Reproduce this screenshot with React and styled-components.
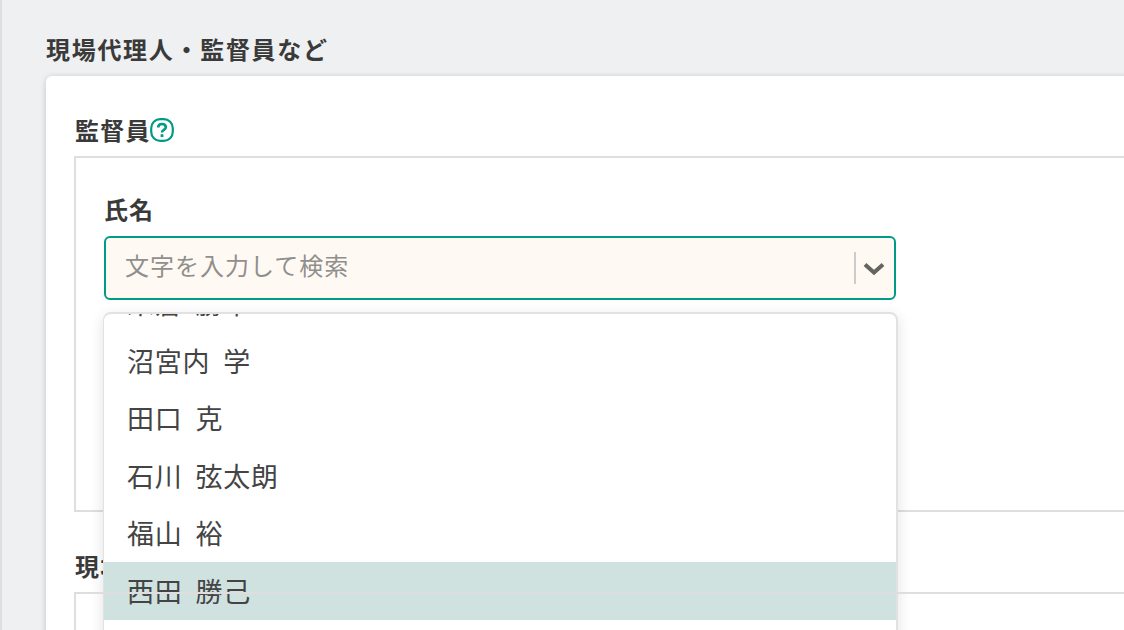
import React from 'react'
import styled, { createGlobalStyle } from 'styled-components'

const GlobalStyle = createGlobalStyle`
  html, body {
    margin: 0;
    height: 630px;
    overflow: hidden;
    background: #eff0f2;
  }
  * { box-sizing: border-box; }
`;

const Page = styled.div`
  width: 1124px;
  height: 630px;
  overflow: hidden;
  padding-left: 46px;
  background: #eff0f2;
  border-left: 2px solid #dedfe1;
  font-family: "Noto Sans CJK JP", "Noto Sans", sans-serif;
  color: #3a3a3a;
`;

const PageTitle = styled.h2`
  margin: 0 0 0 -2px;
  padding-top: 31px;
  height: 76px;
  font-size: 24px;
  line-height: 36px;
  font-weight: 700;
  letter-spacing: 1.7px;
`;

const Card = styled.section`
  margin-left: -2px;
  width: 1100px;
  height: 700px;
  padding: 36px 0 0 28px;
  background: #fff;
  border-radius: 6px 0 0 0;
  box-shadow: 0 1px 6px rgba(0, 0, 0, 0.18);
`;

const Label = styled.div`
  display: flex;
  align-items: center;
  height: 36px;
  padding: 0 0 2px 1px;
  font-size: 24px;
  font-weight: 700;
  letter-spacing: 1.3px;
  margin-bottom: 8px;
`;

const Help = styled.svg`
  width: 24px;
  height: 24px;
  margin: 2px 0 0 -1px;
`;

const Box = styled.div`
  position: relative;
  height: ${p => p.$height}px;
  margin-bottom: ${p => p.$bottom}px;
  padding: 34px 0 0 28px;
  border: 2px solid #dedede;
  border-right: none;
`;

const FieldName = styled.div`
  height: 36px;
  font-size: 24px;
  line-height: 34px;
  font-weight: 700;
  letter-spacing: 1px;
  margin-bottom: 8px;
`;

const Select = styled.div`
  display: flex;
  align-items: center;
  width: 792px;
  height: 64px;
  padding: 0 8px 0 19px;
  background: #fff9f3;
  border: 2px solid #009a87;
  border-radius: 6px;
`;

const Placeholder = styled.span`
  flex: 1;
  padding-bottom: 6px;
  font-size: 24px;
  line-height: 36px;
  letter-spacing: 1px;
  color: #8f8f8d;
`;

const Divider = styled.span`
  width: 2px;
  height: 32px;
  margin-right: 6px;
  background: #cccccc;
`;

const Chevron = styled.svg`
  width: 24px;
  height: 24px;
`;

const Menu = styled.div`
  position: absolute;
  top: 154px;
  left: 27px;
  width: 795px;
  height: 420px;
  overflow: hidden;
  background: #fff;
  border: 2px solid #e2e2e2;
  border-left-width: 1px;
  border-radius: 8px;
  box-shadow: 0 4px 14px rgba(0, 0, 0, 0.12);
`;

const List = styled.ul`
  margin: -40px 0 0;
  padding: 0;
  list-style: none;
`;

const Option = styled.li`
  height: 57.6px;
  padding-left: 23px;
  font-size: 27px;
  line-height: 58px;
  letter-spacing: 0.8px;
  word-spacing: 6px;
  color: #444444;
  white-space: pre;
  background: ${p => (p.$active ? '#cfe2e0' : 'transparent')};
`;

const names = ['米倉 勝幸', '沼宮内 学', '田口 克', '石川 弦太朗', '福山 裕', '西田 勝己', '']

const App = () => {
  return (
    <Page>
      <GlobalStyle />
      <PageTitle>現場代理人・監督員など</PageTitle>
      <Card>
        <Label>
          監督員
          <Help viewBox="0 0 24 24" fill="none">
            <rect x="1.2" y="1.2" width="21.6" height="21.6" rx="9" stroke="#009a87" strokeWidth="2.2" />
            <path d="M8.200 9.600c0-2.200 1.600-3.600 3.800-3.600s3.800 1.300 3.800 3.200c0 2.800-3.800 2.600-3.800 5.300" stroke="#009a87" strokeWidth="2.600" />
            <rect x="10.600" y="16.200" width="2.800" height="2.800" fill="#009a87" />
          </Help>
        </Label>
        <Box $height={356} $bottom={36}>
          <FieldName>氏名</FieldName>
          <Select>
            <Placeholder>文字を入力して検索</Placeholder>
            <Divider />
            <Chevron viewBox="0 0 24 24" fill="none">
              <path d="M3 8.500l9 8 9-8" stroke="#666461" strokeWidth="4" />
            </Chevron>
          </Select>
          <Menu>
            <List>
              {names.map((n, i) => (
                <Option key={i} $active={n === '西田 勝己'}>{n}</Option>
              ))}
            </List>
          </Menu>
        </Box>
        <Label>現場</Label>
        <Box $height={200} $bottom={0} />
      </Card>
    </Page>
  )
}

export default App
